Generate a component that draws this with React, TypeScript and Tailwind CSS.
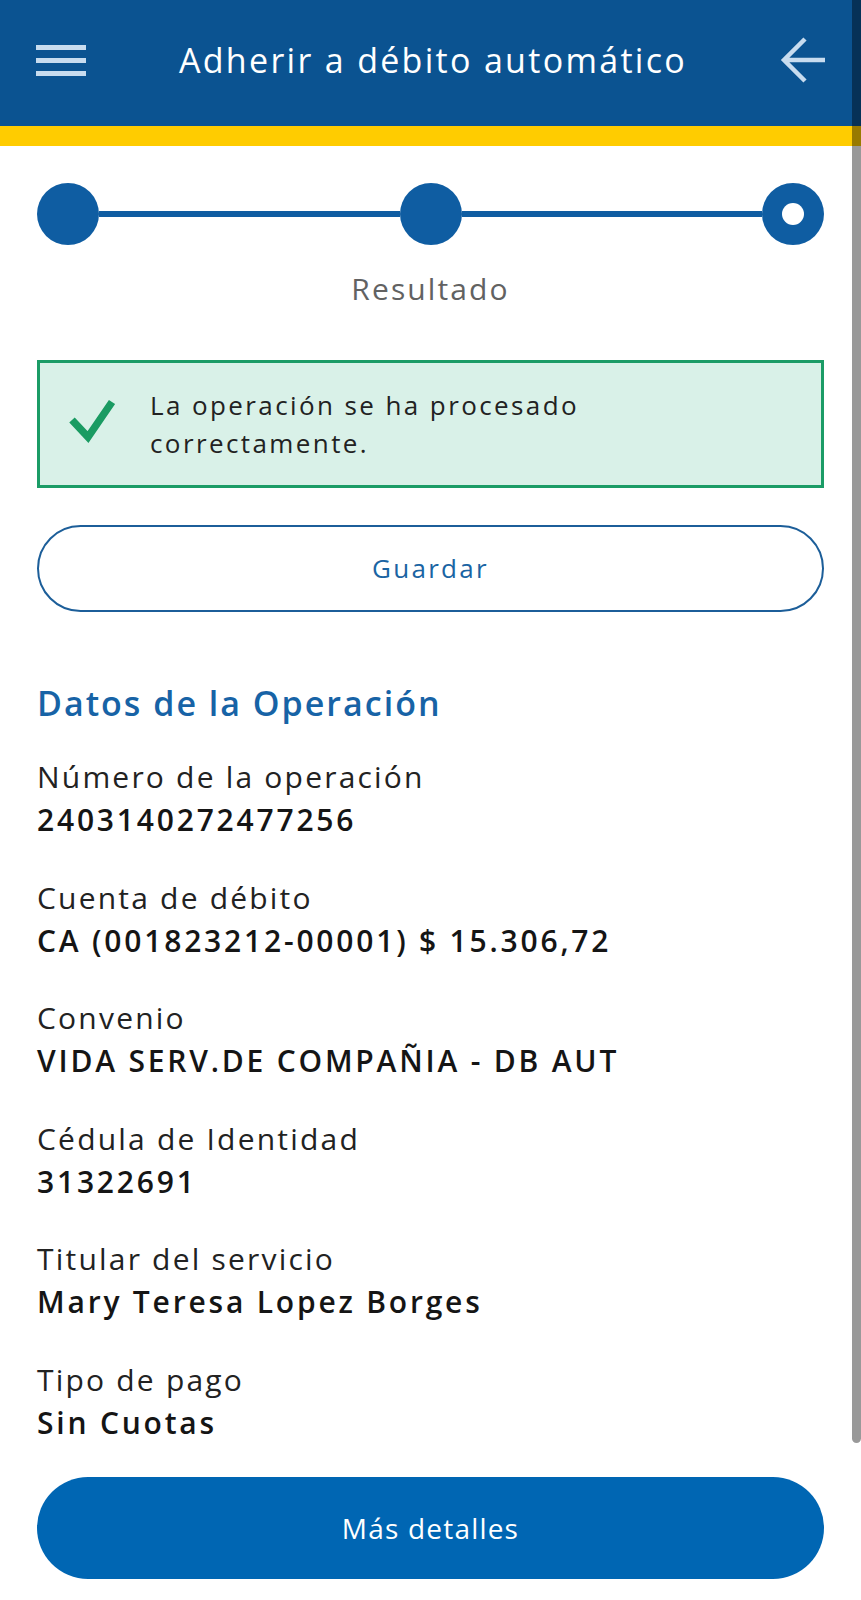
import React from "react";

const rows = [
  { label: "Número de la operación", value: "2403140272477256" },
  { label: "Cuenta de débito", value: "CA (001823212-00001) $ 15.306,72" },
  { label: "Convenio", value: "VIDA SERV.DE COMPAÑIA - DB AUT" },
  { label: "Cédula de Identidad", value: "31322691" },
  { label: "Titular del servicio", value: "Mary Teresa Lopez Borges" },
  { label: "Tipo de pago", value: "Sin Cuotas" },
];

export default function App() {
  return (
    <div
      className="relative w-[861px] min-h-[1600px] bg-white overflow-hidden"
      style={{ fontFamily: '"Open Sans", "Noto Sans", sans-serif' }}
    >
      {/* Header */}
      <header className="h-[126px] bg-[#0b5391]">
        <div className="h-[120px] flex items-center px-[36px]">
          <svg width="50" height="36" viewBox="0 0 50 36" className="shrink-0">
            <rect x="0" y="3" width="50" height="5" fill="#c8dcef" />
            <rect x="0" y="16" width="50" height="5" fill="#c8dcef" />
            <rect x="0" y="29" width="50" height="5" fill="#c8dcef" />
          </svg>
          <h1 className="flex-1 text-center text-white text-[34px] tracking-[2.3px] leading-none">
            Adherir a débito automático
          </h1>
          <svg width="48" height="48" viewBox="0 0 48 48" className="shrink-0 mr-[-3px]">
            <path
              d="M45 24 H5 M25 3 L4 24 L25 45"
              stroke="#c8dcef"
              strokeWidth="4.5"
              fill="none"
              strokeLinejoin="miter"
            />
          </svg>
        </div>
      </header>
      <div className="h-[20px] bg-[#ffcc00]" />

      <main className="px-[37px] flex flex-col">
        {/* Stepper */}
        <div className="mt-[37px] flex items-center">
          <div className="w-[62px] h-[62px] rounded-full bg-[#0f5da2] shrink-0" />
          <div className="flex-1 h-[6px] bg-[#0f5da2]" />
          <div className="w-[62px] h-[62px] rounded-full bg-[#0f5da2] shrink-0" />
          <div className="flex-1 h-[6px] bg-[#0f5da2]" />
          <div className="w-[62px] h-[62px] rounded-full bg-[#0f5da2] shrink-0 flex items-center justify-center">
            <div className="w-[22px] h-[22px] rounded-full bg-white" />
          </div>
        </div>
        <div className="mt-[26px] text-center text-[#626262] text-[30px] font-medium leading-[36px] tracking-[2.1px]">
          Resultado
        </div>

        {/* Success box */}
        <div className="mt-[53px] h-[128px] border-[3px] border-[#1b9c66] bg-[#d9f1e8] flex items-center">
          <svg width="50" height="48" viewBox="0 0 50 48" className="ml-[26px] shrink-0 mt-[-10px]">
            <path d="M6 25 L22 42 L46 7" stroke="#1a9b62" strokeWidth="7.5" fill="none" />
          </svg>
          <p className="ml-[34px] text-[#222222] text-[26px] leading-[38px] tracking-[2.4px]">
            La operación se ha procesado
            <br />
            correctamente.
          </p>
        </div>

        {/* Guardar */}
        <button className="mt-[37px] h-[87px] rounded-full border-2 border-[#1c5e99] text-[#1a64a3] text-[26px] tracking-[2.3px]">
          Guardar
        </button>

        {/* Datos */}
        <h2 className="mt-[71px] text-[#1763a6] text-[34px] font-semibold leading-[41px] tracking-[2px]">
          Datos de la Operación
        </h2>
        <div className="mt-[31px] flex flex-col gap-[34.5px]">
          {rows.map((r) => (
            <div key={r.label} className="flex flex-col">
              <div className="text-[#222222] text-[30px] leading-[43px] tracking-[2.2px]">{r.label}</div>
              <div className="text-[#151515] text-[30px] font-semibold leading-[43px] tracking-[2.8px]">
                {r.value}
              </div>
            </div>
          ))}
        </div>

        <button className="mt-[33px] h-[102px] rounded-full bg-[#0066b3] text-white text-[28px] tracking-[1.2px]">
          Más detalles
        </button>
      </main>

      {/* Scrollbar overlay */}
      <div className="absolute right-0 top-0 w-[9px] h-[1443px] bg-black/40 rounded-b-[5px]" />
    </div>
  );
}
